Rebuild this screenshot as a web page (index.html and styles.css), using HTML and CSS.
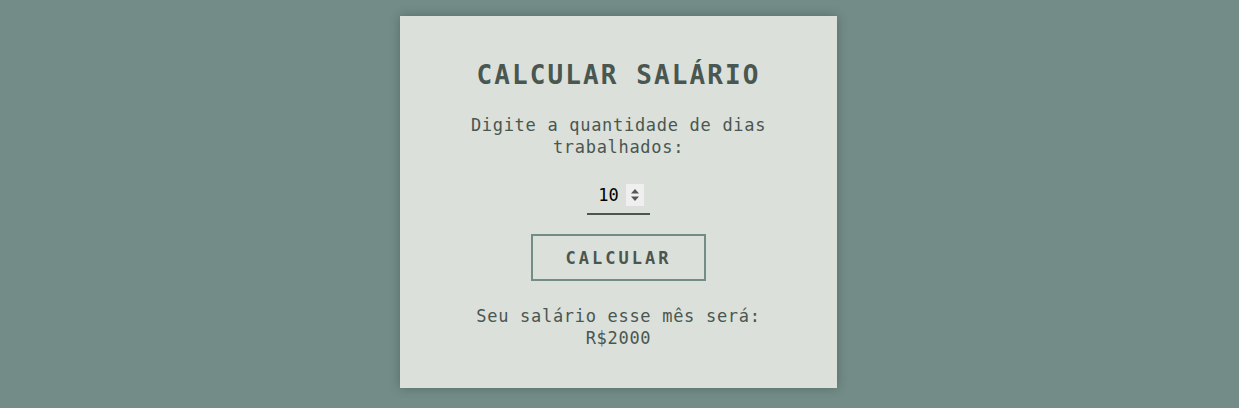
FILE: index.html
```html
<!DOCTYPE html>
<html lang="pt-BR">
<head>
<meta charset="utf-8">
<title>Calcular Salário</title>
<link rel="stylesheet" href="styles.css">
</head>
<body>
<main class="page">
  <section class="card">
    <h1 class="title">CALCULAR SALÁRIO</h1>
    <label class="label" for="dias">Digite a quantidade de dias trabalhados:</label>
    <input class="days" id="dias" type="number" value="10">
    <button class="btn" type="button">CALCULAR</button>
    <p class="result">Seu salário esse mês será:<br>R$2000</p>
  </section>
</main>
</body>
</html>
```
FILE: styles.css
```css
* { box-sizing: border-box; }
html, body {
  margin: 0;
  padding: 0;
  height: 100%;
}
body {
  background: #738c87;
  font-family: "DejaVu Sans Mono", monospace;
  color: #4a5650;
}
.page {
  display: flex;
  justify-content: center;
  padding-top: 16px;
  padding-right: 2px;
}
.card {
  width: 437px;
  height: 372px;
  background: #dbe0da;
  box-shadow: 0 0 10px rgba(0, 0, 0, 0.25);
  display: flex;
  flex-direction: column;
  align-items: center;
  padding: 44px 60px 0;
  text-align: center;
}
.title {
  margin: 0;
  font-size: 26px;
  font-weight: bold;
  letter-spacing: 2.1px;
  line-height: 30px;
}
.label {
  margin-top: 24px;
  font-size: 17px;
  line-height: 22px;
  letter-spacing: 0.7px;
  display: block;
  width: 320px;
}
.days {
  margin-top: 24px;
  width: 63px;
  height: 33px;
  border: none;
  border-bottom: 2px solid #4a5650;
  background: transparent;
  font-family: "DejaVu Sans Mono", monospace;
  font-size: 17px;
  text-align: center;
  color: #000;
  outline: none;
  padding: 2px 6px 7px 8px;
}
.days::-webkit-inner-spin-button {
  -webkit-appearance: none;
  appearance: none;
  opacity: 1;
  width: 18px;
  height: 22px;
  margin-left: 4px;
  background: #efefef url("data:image/svg+xml,%3Csvg xmlns='http://www.w3.org/2000/svg' width='18' height='22' viewBox='0 0 18 22'%3E%3Cpath d='M5 9.5h8l-4-4.5z' fill='%23555'/%3E%3Cpath d='M5 12.5h8l-4 4.5z' fill='%23555'/%3E%3C/svg%3E") no-repeat center;
}
.btn {
  margin-top: 19px;
  width: 175px;
  height: 47px;
  background: transparent;
  border: 2px solid #738c87;
  font-family: "DejaVu Sans Mono", monospace;
  font-weight: bold;
  font-size: 17px;
  letter-spacing: 3px;
  color: #4a5650;
  padding: 0;
}
.result {
  margin: 24px 0 0;
  font-size: 17px;
  line-height: 22px;
  letter-spacing: 0.7px;
}
```
